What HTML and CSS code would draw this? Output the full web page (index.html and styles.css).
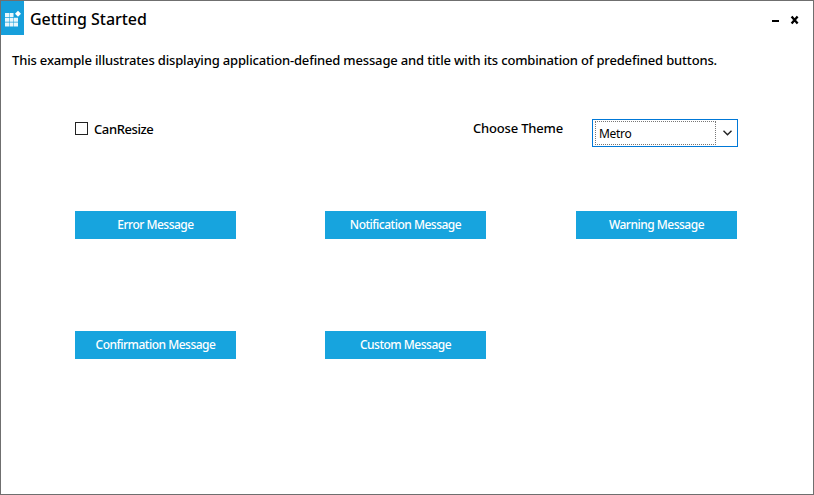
FILE: index.html
```html
<!DOCTYPE html>
<html lang="en">
<head>
<meta charset="utf-8">
<title>Getting Started</title>
<link rel="stylesheet" href="styles.css">
</head>
<body>
<div class="window">
  <header class="titlebar">
    <div class="app-icon">
      <svg width="23" height="34" viewBox="0 0 23 34">
        <g fill="#fff">
          <path opacity=".9" d="M4 12h4v4H4zM8.500 12h4v4h-4zM4 16.800h4v4H4zM8.500 16.800h4v4h-4zM13 16.800h4v4h-4zM4 21.600h4v4H4zM8.500 21.600h4v4h-4zM13 21.600h4v4h-4z"/>
          <path d="M17 9.800l3 3-3 3-3-3z"/>
        </g>
      </svg>
    </div>
    <h1 class="title">Getting Started</h1>
    <div class="controls">
      <svg width="28" height="10" viewBox="0 0 28 10">
        <path fill="#000" d="M0 5h7v2H0z"/>
        <path fill="none" stroke="#000" stroke-width="2.300" d="M19.600 1.400l6 7.200M25.600 1.400l-6 7.200"/>
      </svg>
    </div>
  </header>
  <p class="intro">This example illustrates displaying application-defined message and title with its combination of predefined buttons.</p>
  <div class="options">
    <div class="check"><span class="box"></span><span class="check-label">CanResize</span></div>
    <div class="theme">
      <span class="theme-label">Choose Theme</span>
      <div class="combo">
        <span class="combo-value"><span class="combo-text">Metro</span></span>
        <svg class="chevron" width="9" height="6" viewBox="0 0 9 6"><path fill="none" stroke="#222" stroke-width="1.400" d="M.5.700l4 4 4-4"/></svg>
      </div>
    </div>
  </div>
  <div class="buttons">
    <div class="btn"><span>Error Message</span></div>
    <div class="btn"><span>Notification Message</span></div>
    <div class="btn"><span>Warning Message</span></div>
    <div class="btn"><span>Confirmation Message</span></div>
    <div class="btn"><span>Custom Message</span></div>
  </div>
</div>
</body>
</html>
```
FILE: styles.css
```css
* { box-sizing: border-box; }
body { margin: 0; background: #fff; font-family: "Noto Sans", "Open Sans", sans-serif; color: #000; }
.window { width: 814px; height: 495px; border: 1px solid #6f6f6f; background: #fff; white-space: nowrap; }
.titlebar { display: flex; height: 34px; }
.app-icon { width: 23px; height: 34px; background: #169fdb; }
.app-icon svg { display: block; }
.title { margin: 0 0 0 6px; font-size: 16px; font-weight: 500; line-height: 36px; letter-spacing: -0.05px; }
.controls { margin: 14px 13px 0 auto; height: 10px; }
.controls svg { display: block; }
.intro { margin: 16px 0 0 11px; font-size: 13px; font-weight: 500; line-height: 18px; letter-spacing: -0.165px; }
.options { display: flex; justify-content: space-between; margin: 50px 75px 0 74px; height: 28px; font-size: 13px; font-weight: 500; line-height: 18px; }
.check { display: flex; padding-top: 1px; }
.box { width: 13px; height: 13px; border: 1px solid #222; margin: 2px 6px 0 0; }
.check-label { letter-spacing: -0.4px; }
.theme { display: flex; }
.theme-label { width: 119px; letter-spacing: -0.18px; }
.combo { display: flex; align-items: center; width: 146px; height: 28px; border: 1px solid #0078d7; padding-left: 2px; }
.combo-value { width: 121px; height: 24px; border: 1px dotted #777; padding-left: 3px; font-size: 12px; font-weight: 400; line-height: 23px; letter-spacing: -0.3px; }
.chevron { margin-left: 7px; }
.buttons { display: grid; grid-template-columns: 250px 251px 161px; row-gap: 92px; margin: 64px 0 0 74px; }
.btn { width: 161px; height: 28px; background: #17a4de; color: #fff; font-size: 12px; font-weight: 500; line-height: 28px; text-align: center; letter-spacing: -0.5px; }
```
